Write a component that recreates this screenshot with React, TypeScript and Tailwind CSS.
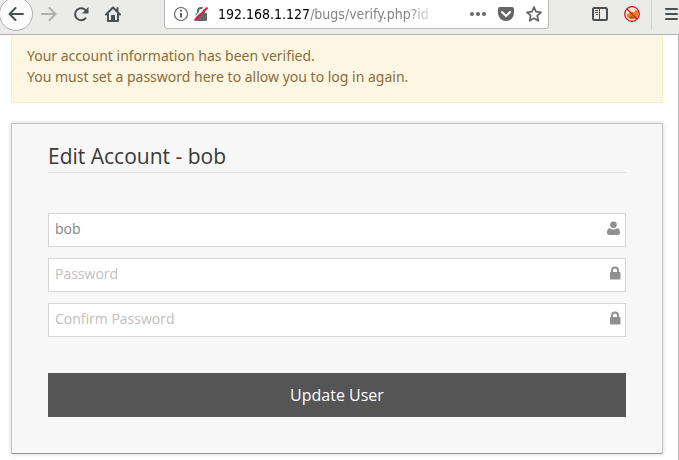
import type { ReactNode } from "react";

const fields = [
  { id: "username", label: "Username", type: "text", value: "bob", icon: <UserIcon /> },
  { id: "password", label: "Password", type: "password", icon: <LockIcon /> },
  { id: "confirm", label: "Confirm Password", type: "password", icon: <LockIcon /> },
];

export default function App() {
  return (
    <div className="min-h-screen bg-white font-['Open_Sans','Noto_Sans',sans-serif]">
      <Toolbar />
      <main className="min-h-[calc(100vh-35px)] border-r border-[#b1b1b3] pr-[15px] pl-[11px]">
        <div className="border border-t-0 border-[#fbeccb] bg-[#fdf6e3] px-[15px] pt-[10px] pb-[15px] font-['Noto_Sans',sans-serif] text-sm leading-[21px] text-[#8a6d3b]">
          <p>Your account information has been verified.</p>
          <p>You must set a password here to allow you to log in again.</p>
        </div>

        <form
          className="mt-5 border border-[#c4c4c2] border-b-[#989898] bg-[#f7f7f7] px-9 pt-[18px] pb-9 shadow-[0_0_4px_rgba(0,0,0,0.2)]"
          onSubmit={(e) => e.preventDefault()}
        >
          <h1 className="border-b border-[#e2e2e2] pb-0.5 text-[21px] leading-7 text-[#393939]">
            Edit Account - bob
          </h1>
          <div className="mt-10 flex flex-col gap-[11px]">
            {fields.map((field) => (
              <label
                key={field.id}
                htmlFor={field.id}
                className="flex h-[34px] items-center border border-[#d5d5d5] bg-white pr-1 pl-1.5"
              >
                <input
                  id={field.id}
                  type={field.type}
                  defaultValue={field.value}
                  placeholder={field.label}
                  aria-label={field.label}
                  className="min-w-0 flex-1 bg-transparent pb-0.5 text-sm text-[#858585] outline-none placeholder:text-[#c0c0c0]"
                />
                {field.icon}
              </label>
            ))}
          </div>
          <button type="submit" className="mt-9 h-11 w-full bg-[#555555] text-base text-white">
            Update User
          </button>
        </form>
      </main>
    </div>
  );
}

function Toolbar() {
  return (
    <header className="flex h-[35px] items-start border-b border-[#b1b1b3] bg-[#ebebea] text-[#4a4f52]">
      <nav className="flex h-7 items-center">
        <ToolButton label="Back" className="-ml-px h-[34px] w-[34px] rounded-full border border-[#b1b1b3] bg-[#fbfbfb]">
          <ArrowIcon />
        </ToolButton>
        <ToolButton label="Forward" className="ml-2 h-4 text-[#b0b0b0]">
          <span className="rotate-180"><ArrowIcon /></span>
        </ToolButton>
        <ToolButton label="Reload" className="ml-4 h-4">
          <ReloadIcon />
        </ToolButton>
        <ToolButton label="Home" className="ml-4 h-4">
          <HomeIcon />
        </ToolButton>
      </nav>

      <div className="ml-[43px] flex h-[29px] min-w-0 flex-1 items-center rounded-b border border-t-0 border-[#b9b9b9] bg-white pr-1.5 pl-2 text-[#666666]">
        <InfoIcon />
        <InsecureIcon />
        <a
          href="#verify"
          className="ml-[9px] min-w-0 flex-1 whitespace-nowrap text-sm text-[#858585] [mask-image:linear-gradient(to_right,black_190px,transparent_220px)] font-['DejaVu_Sans_Condensed','DejaVu_Sans',sans-serif]"
        >
          <span className="text-black">192.168.1.127</span>/bugs/verify.php?id
        </a>
        <ToolButton label="Page actions" className="ml-8"><DotsIcon /></ToolButton>
        <ToolButton label="Save to Pocket" className="ml-3"><PocketIcon /></ToolButton>
        <ToolButton label="Bookmark" className="ml-3"><StarIcon /></ToolButton>
      </div>

      <div className="ml-[43px] flex h-7 items-center">
        <ToolButton label="Sidebar"><SidebarIcon /></ToolButton>
        <ToolButton label="Proxy off" className="ml-4"><ProxyIcon /></ToolButton>
        <span className="ml-[11px] h-8 w-px bg-[#cfcfcf]" />
        <ToolButton label="Menu" className="ml-[13px]"><MenuIcon /></ToolButton>
      </div>
    </header>
  );
}

function ToolButton({ label, className = "", children }: { label: string; className?: string; children: ReactNode }) {
  return (
    <button type="button" aria-label={label} className={`flex shrink-0 items-center justify-center ${className}`}>
      {children}
    </button>
  );
}

function ArrowIcon() {
  return (
    <svg width="16" height="16" viewBox="0 0 16 16" fill="none" stroke="currentColor" strokeWidth="2" strokeLinecap="round" strokeLinejoin="round">
      <path d="M15 8H1.5M7.5 2L1.5 8l6 6" />
    </svg>
  );
}

function ReloadIcon() {
  return (
    <svg width="16" height="16" viewBox="0 0 16 16" fill="none" stroke="currentColor" strokeWidth="2" strokeLinecap="round">
      <path d="M12.5 12.3A6 6 0 1 1 12.8 4.5" />
      <path d="M15.500 1v6.500H9z" fill="currentColor" stroke="none" />
    </svg>
  );
}

function HomeIcon() {
  return (
    <svg width="16" height="16" viewBox="0 0 16 16" fill="none" stroke="currentColor" strokeWidth="2" strokeLinecap="round" strokeLinejoin="round">
      <path d="M1 8.500l7-7 7 7M3 8v7h10V8M12.500 2v3" />
      <path d="M6 9h4v5.500H6z" fill="currentColor" stroke="none" />
    </svg>
  );
}

function InfoIcon() {
  return (
    <svg className="shrink-0" width="16" height="16" viewBox="0 0 16 16" fill="none" stroke="currentColor">
      <circle cx="8" cy="8" r="6.5" strokeWidth="1.2" />
      <path d="M8 7v4.5" strokeWidth="2" />
      <circle cx="8" cy="4.7" r="1.1" fill="currentColor" stroke="none" />
    </svg>
  );
}

function InsecureIcon() {
  return (
    <svg className="ml-1 shrink-0" width="16" height="16" viewBox="0 0 16 16" fill="none">
      <path d="M5 8V5a3 3 0 0 1 6 0v3" stroke="#666666" strokeWidth="2" />
      <rect x="2.5" y="7" width="11.5" height="8" rx="1" fill="#666666" />
      <path d="M0 13L13 0" stroke="white" strokeWidth="1.5" />
      <path d="M1.5 14.5L14.5 1.5" stroke="#ff0a47" strokeWidth="1.8" />
    </svg>
  );
}

function DotsIcon() {
  return (
    <svg width="16" height="16" viewBox="0 0 16 16" fill="currentColor">
      <circle cx="2" cy="8" r="2" />
      <circle cx="8" cy="8" r="2" />
      <circle cx="14" cy="8" r="2" />
    </svg>
  );
}

function PocketIcon() {
  return (
    <svg width="16" height="16" viewBox="0 0 16 16">
      <path d="M2 1h12q2 0 2 2v4a8 8 0 0 1-16 0V3q0-2 2-2z" fill="currentColor" />
      <path d="M4 6l4 4 4-4" fill="none" stroke="white" strokeWidth="2" strokeLinecap="round" strokeLinejoin="round" />
    </svg>
  );
}

function StarIcon() {
  return (
    <svg width="16" height="16" viewBox="0 0 16 16" fill="none" stroke="currentColor" strokeWidth="1.8" strokeLinejoin="round">
      <path d="M8 1l2 4.700 5 .6-3.700 3.400 1 5.100L8 12.300l-4.300 2.500 1-5.100L1 6.300l5-.6z" />
    </svg>
  );
}

function SidebarIcon() {
  return (
    <svg width="16" height="16" viewBox="0 0 16 16" fill="none" stroke="currentColor">
      <rect x="1" y="2" width="14" height="12" rx="1.5" strokeWidth="2" />
      <path d="M7.5 2v12" />
      <path d="M3 4.5h3M3 6.5h3M4 8.5h2" />
    </svg>
  );
}

function ProxyIcon() {
  return (
    <svg width="16" height="16" viewBox="0 0 16 16" fill="none">
      <circle cx="8" cy="8" r="7" fill="#f0e6e0" />
      <path d="M3 8l2-.5 2-2 3 1 2-3 2 2v4l-2 3.500H6l-3-2z" fill="#e98212" />
      <path d="M5 11l3-1 2 2-3 1z" fill="#a85b18" />
      <circle cx="8" cy="8" r="7.3" stroke="#d3141c" strokeWidth="1.3" />
      <path d="M3 3l10 10" stroke="#d3141c" strokeWidth="1.3" />
    </svg>
  );
}

function MenuIcon() {
  return (
    <svg width="14" height="16" viewBox="0 0 14 16" stroke="currentColor" strokeWidth="2" strokeLinecap="round">
      <path d="M1 3h11M1 8h11M1 13h11" />
    </svg>
  );
}

function UserIcon() {
  return (
    <svg className="mr-px mb-1" width="14" height="14" viewBox="0 0 14 14" fill="#909090">
      <circle cx="7.500" cy="3.800" r="3.300" />
      <path d="M4 7.200q3.500 2.400 7 0q3 .2 3 4.300 0 2.500-2.500 2.500h-8Q1 14 1 11.500q0-4.100 3-4.300z" />
    </svg>
  );
}

function LockIcon() {
  return (
    <svg className="mb-1" width="12" height="14" viewBox="0 0 12 14" fill="#909090">
      <path d="M2 6V4.500a4 4 0 0 1 8 0V6h.5q1 0 1 .8v5.900q0 .8-.8.8H1.800q-.8 0-.8-.8V6.800q0-.8.8-.8zM4 6h4V4.500a2 2 0 0 0-4 0z" />
    </svg>
  );
}
